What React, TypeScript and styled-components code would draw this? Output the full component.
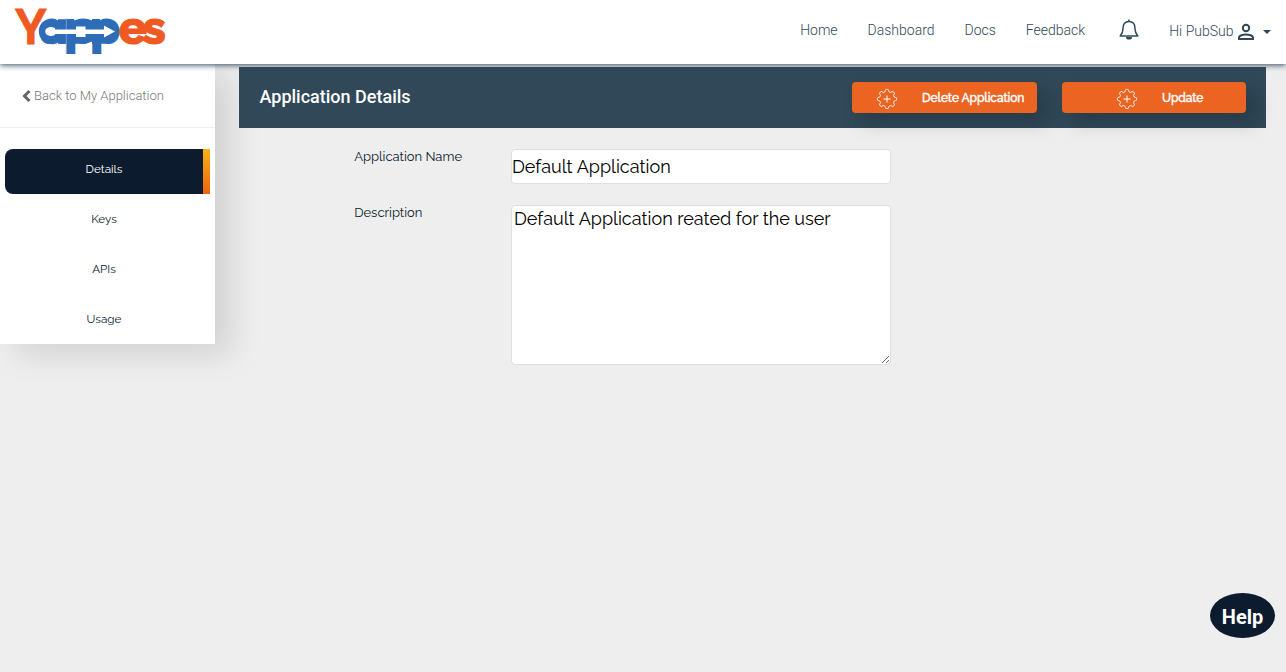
import React from 'react';
import styled, { createGlobalStyle, css } from 'styled-components';

const raleway = `Raleway, Lato, "Open Sans", sans-serif`;

const GlobalStyle = createGlobalStyle`
  *, *::before, *::after { box-sizing: border-box; }
  body { margin: 0; background: #eee; font-family: Roboto, sans-serif; color: #304858; }
`;

const Page = styled.div`
  min-height: 672px;
  display: flex;
  flex-direction: column;
  overflow: hidden;
`;

const Header = styled.header`
  height: 64px;
  display: flex;
  align-items: flex-start;
  justify-content: space-between;
  padding: 0 15px;
  background: #fff;
  box-shadow: 0 1px 6px #304858;
  position: relative;
  z-index: 1;
`;

const Logo = styled.svg`
  display: block;
  width: 160px;
  height: 64px;
  overflow: visible;
`;

const Nav = styled.nav`
  display: flex;
  align-items: flex-start;
  padding-top: 19px;
`;

const NavLink = styled.a<{ $gap: number }>`
  font-size: 14px;
  font-weight: 300;
  line-height: 23px;
  margin-right: ${({ $gap }) => $gap}px;
  white-space: nowrap;
`;

const Bell = styled.svg`
  width: 20px;
  height: 22px;
  margin-right: 30px;
`;

const User = styled.div`
  display: flex;
  align-items: center;
  height: 24px;
  font-size: 14px;
  font-weight: 300;
`;

const UserIcon = styled.svg`
  width: 18px;
  height: 18px;
  margin: 2px 0 0 3px;
`;

const Caret = styled.span`
  margin: 2px 0 0 8.5px;
  border: 4px solid transparent;
  border-top-color: #304858;
  border-bottom: 0;
`;

const Body = styled.div`
  display: flex;
  align-items: flex-start;
`;

const Sidebar = styled.aside`
  width: 215px;
  height: 280px;
  background: #fff;
  box-shadow: 16px 10px 30px rgba(0, 0, 0, 0.12);
`;

const Back = styled.a`
  display: flex;
  align-items: center;
  gap: 3px;
  height: 64px;
  padding-left: 22px;
  border-bottom: 1px solid #ededed;
  color: #777;
  font-size: 13px;
  font-weight: 300;
`;

const Menu = styled.ul`
  list-style: none;
  margin: 0;
  padding: 21px 5px 0;
`;

const MenuItem = styled.li<{ $active?: boolean }>`
  height: 45px;
  margin-bottom: 5px;
  padding: 11px 7px 0 0;
  border-radius: 8px 0 0 8px;
  color: #0c1b2e;
  font: 400 11.7px/18px ${raleway};
  text-align: center;
  ${({ $active }) =>
    $active &&
    css`
      color: #fff;
      background: linear-gradient(#f7b01a, #ec6410) right / 7px 100% no-repeat, #0c1b2e;
    `}
`;

const Main = styled.main`
  flex: 1;
  padding: 3px 20px 0 24px;
`;

const TitleBar = styled.div`
  height: 61px;
  display: flex;
  align-items: flex-start;
  padding: 15px 20px 0 20.5px;
  background: #304858;
`;

const Title = styled.h1`
  flex: 1;
  margin: 0;
  color: #fff;
  font-size: 18px;
  font-weight: 500;
  line-height: 30px;
`;

const Action = styled.button<{ $width: number; $pad: number }>`
  width: ${({ $width }) => $width}px;
  height: 31px;
  display: flex;
  align-items: center;
  gap: 24px;
  margin-left: 25px;
  padding: 0 0 0 ${({ $pad }) => $pad}px;
  border: 0;
  border-radius: 4px;
  background: #eb6421;
  color: #fff;
  font: 500 12px ${raleway};
  letter-spacing: -0.08px;
  -webkit-text-stroke: 0.4px #fff;
  white-space: nowrap;
  box-shadow: 10px 10px 20px rgba(0, 0, 0, 0.18);
`;

const Gear = styled.svg`
  flex: none;
  width: 22px;
  height: 22px;
  margin-top: 3px;
`;

const Form = styled.form`
  display: grid;
  grid-template-columns: 156.8px 380px;
  row-gap: 21px;
  padding: 21px 0 0 115.2px;
`;

const Label = styled.label`
  color: #0c1b2e;
  font: 400 13px/16px ${raleway};
`;

const field = css`
  display: block;
  width: 380px;
  margin: 0;
  border: 1px solid #dfdfdf;
  border-radius: 4px;
  background: #fff;
  color: #000;
  outline: none;
  font: 400 18px/22px ${raleway};
`;

const Input = styled.input`
  ${field}
  height: 35px;
  padding: 0;
`;

const TextArea = styled.textarea`
  ${field}
  height: 160px;
  padding: 2px;
`;

const Help = styled.button`
  position: fixed;
  right: 11px;
  bottom: 34px;
  width: 65px;
  height: 45px;
  border: 0;
  padding: 3px 0 0;
  border-radius: 50%;
  background: #0c1b2e;
  color: #fff;
  font: 700 20px Roboto, sans-serif;
`;

const gearPath = Array.from({ length: 97 }, (_, i) => {
  const a = (i / 96) * Math.PI * 2;
  const r = 8.5 + 1.1 * Math.tanh(2.5 * Math.cos(8 * a));
  return `${i ? 'L' : 'M'}${(11 + r * Math.cos(a)).toFixed(2)} ${(11 + r * Math.sin(a)).toFixed(2)}`;
}).join('') + 'Z';

const GearPlus = () => (
  <Gear viewBox="0 0 22 22" fill="none" stroke="#fff" strokeWidth="1">
    <path d={gearPath} />
    <path d="M11 7.5v7M7.5 11h7" />
  </Gear>
);

export default function App() {
  return (
    <Page>
      <GlobalStyle />
      <Header>
        <Logo viewBox="15 0 160 64" fontFamily="Raleway, Lato, sans-serif" fontWeight="900">
          {/* blue band that carries the arrow */}
          <path
            d="M52 18.500C44.500 18.500 38.800 24 38.800 31.300S44.500 44.300 52 44.300C54.500 44.300 56.500 43.500 58 42.500V43.700H86L92 41.500V43.700H106C113.500 43.700 119 38.500 119 31.300S113.500 18.500 106 18.500C103.500 18.500 101.500 19.300 100 20.500V19.200H92V20.500Q86 17.500 80 18.800L74 20.500V19.200H58V20.500Q55.500 18.500 52 18.500Z"
            fill="#2e6cb8"
          />
          <text y="43.5" fontSize="47" fill="#f05a22">
            <tspan x="15" fontSize="48" fontWeight="700" stroke="#f05a22" strokeWidth="0.8">Y</tspan>
            <tspan x="40" fontSize="44" fill="#2e6cb8">a</tspan>
            <tspan x="64" fontSize="47" fill="#2e6cb8">p</tspan>
            <tspan x="90" fontSize="47" fill="#2e6cb8">p</tspan>
            <tspan x="118.800" fontWeight="800" stroke="#f05a22" strokeWidth="1">e</tspan>
            <tspan x="142.500" fontWeight="800" stroke="#f05a22" strokeWidth="1">s</tspan>
          </text>
          <path d="M66.300 18V54" stroke="#8fb0d8" strokeWidth="0.7" />
          <path
            d="M55 29.500V28Q53 27 50.500 27C43.500 27 43.500 36 50.500 36Q53 36 55 35V34H76V37H85.500V34H104V37.500L115 31.500L104 25.500V29.500H85.500V26.500H76V29.500Z"
            fill="#fff"
          />
        </Logo>
        <Nav>
          <NavLink $gap={30}>Home</NavLink>
          <NavLink $gap={30}>Dashboard</NavLink>
          <NavLink $gap={30}>Docs</NavLink>
          <NavLink $gap={34}>Feedback</NavLink>
          <Bell viewBox="0 0 20 22" fill="none" stroke="#304858" strokeWidth="1.5" strokeLinejoin="round">
            <path d="M1.2 17C3 15 4 13 4 9.500C4 5 6 2.500 10 2.500S16 5 16 9.500C16 13 17 15 18.800 17Z" />
            <path d="M10 0.500v2" />
            <path d="M7 18a3 2.600 0 0 0 6 0Z" fill="#304858" stroke="none" />
          </Bell>
          <User>
            Hi PubSub
            <UserIcon viewBox="0 0 18 18" fill="none" stroke="#304858" strokeWidth="2">
              <circle cx="9" cy="5" r="3.2" />
              <path d="M2 16v-1.500C2 12.500 6 11.500 9 11.500s7 1 7 3V16Z" />
            </UserIcon>
            <Caret />
          </User>
        </Nav>
      </Header>
      <Body>
        <Sidebar>
          <Back>
            <svg width="9" height="12" viewBox="0 0 9 12" fill="none" stroke="#666" strokeWidth="3">
              <path d="M7.500 1L2.500 6L7.500 11" />
            </svg>
            Back to My Application
          </Back>
          <Menu>
            <MenuItem $active>Details</MenuItem>
            <MenuItem>Keys</MenuItem>
            <MenuItem>APIs</MenuItem>
            <MenuItem>Usage</MenuItem>
          </Menu>
        </Sidebar>
        <Main>
          <TitleBar>
            <Title>Application Details</Title>
            <Action $width={185} $pad={24}><GearPlus />Delete Application</Action>
            <Action $width={184} $pad={54}><GearPlus />Update</Action>
          </TitleBar>
          <Form>
            <Label htmlFor="name">Application Name</Label>
            <Input id="name" defaultValue="Default Application" />
            <Label htmlFor="description">Description</Label>
            <TextArea id="description" defaultValue="Default Application reated for the user" spellCheck={false} />
          </Form>
        </Main>
      </Body>
      <Help>Help</Help>
    </Page>
  );
}
